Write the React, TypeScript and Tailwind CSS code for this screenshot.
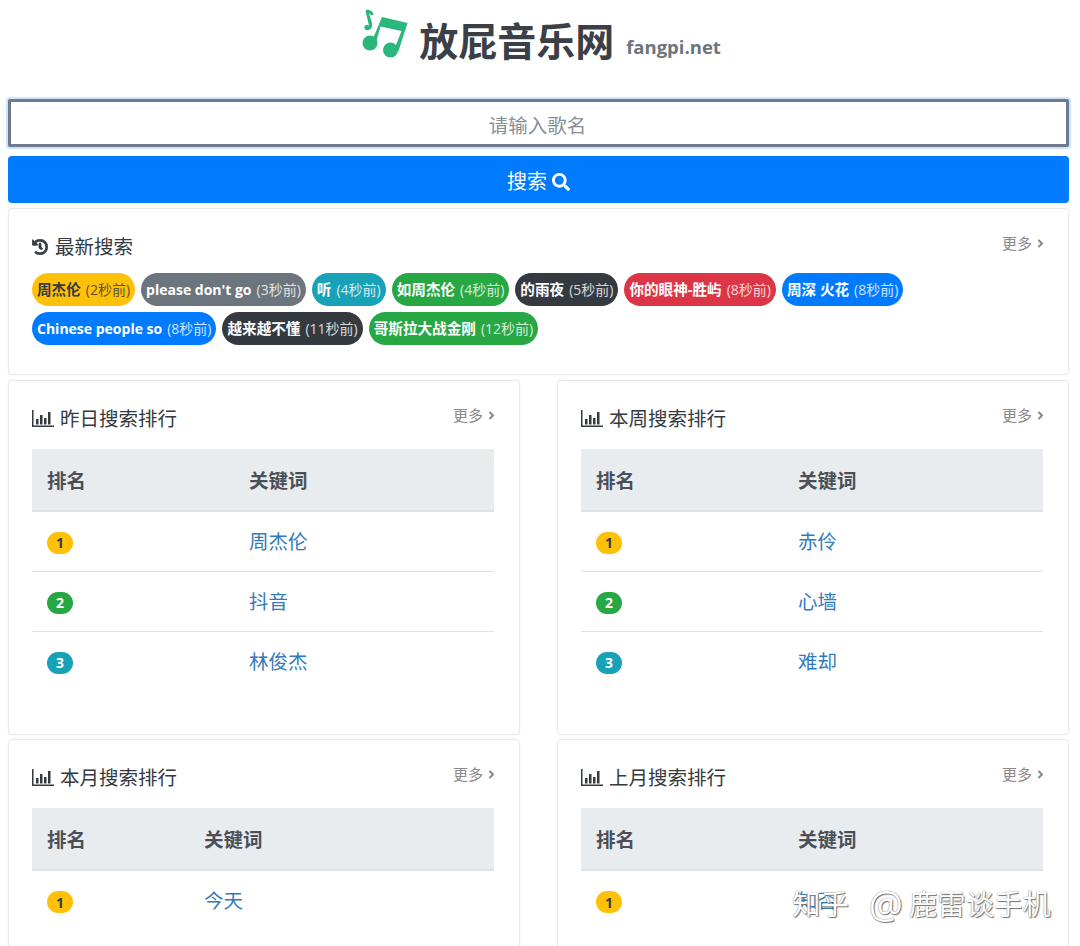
import { FaAngleRight, FaHistory, FaSearch } from "react-icons/fa";

function Logo() {
  return (
    <svg width="50" height="54" viewBox="0 0 50 54" className="mr-[9px]" fill="#2bb67c">
      <circle cx="10" cy="35" r="7.500" />
      <circle cx="30.500" cy="42" r="7.500" />
      <path d="M22 9 L47.500 15 L38.500 43 L34 42 L41.500 23 L20.500 18.500 L15.500 36 L12 33 Z" />
      <path d="M7 1.500 C11 2 13.500 4 13.500 7 L10.500 7 C10.500 6 9.500 5.500 9 5.500 L12 15 C13 19.500 10 23 6 22 C3.500 21 4 17.500 6.500 17 C7.500 16.800 8.500 17 9 17.500 L5.500 3 Z" />
    </svg>
  );
}

function BarIcon() {
  return (
    <svg width="22" height="18" viewBox="0 0 22 18" fill="#343a40" className="mr-[6px] shrink-0">
      <path d="M0 0h1.500v15.500H22V17H0z" />
      <path d="M4 9h2.500v5.500H4zM8 5h2.500v9.500H8zM12 8h2.500v6.500H12zM16 2h2.500v12.500H16z" />
    </svg>
  );
}

const Pill = ({ c, name, time, latin }: { c: string; name: string; time: string; latin?: boolean }) => (
  <span className={`inline-flex h-[33px] items-center rounded-full px-[5px] text-[14px] leading-none whitespace-nowrap ${c}`}>
    <b className={latin ? "font-bold" : "text-[14.6px] font-bold"}>{name}</b>
    <span className="ml-[5px] opacity-80">{time}</span>
  </span>
);

const More = () => (
  <span className="-mr-[4px] flex items-center gap-[2px] text-[15px] leading-none whitespace-nowrap text-[#8a8a8a]">
    更多
    <FaAngleRight className="text-[13px]" />
  </span>
);

const Head = ({ icon, title }: { icon: React.ReactNode; title: string }) => (
  <div className="flex items-center text-[19.5px] leading-[24px] text-[#343a40]">
    {icon}
    <span>{title}</span>
  </div>
);

const ranks = [
  "bg-[#ffc107] text-[#343a40]",
  "bg-[#28a745] text-white",
  "bg-[#17a2b8] text-white",
];

function RankCard({
  title,
  items,
  colClass,
}: {
  title: string;
  items: string[];
  colClass: string;
}) {
  return (
    <section className="h-[355px] rounded-[4px] border border-[#e6e9ec] bg-white pt-[26px] pr-[25px] pl-[23px] shadow-[0_0_3px_rgba(0,0,0,0.05)]">
      <div className="flex items-start justify-between">
        <Head icon={<BarIcon />} title={title} />
        <div className="mt-[1px]">
          <More />
        </div>
      </div>
      <table className="mt-[18px] w-full table-fixed border-collapse text-[19.5px]">
        <thead>
          <tr className="h-[62px] border-b-2 border-[#dee2e6] bg-[#e9ecef] text-left font-bold text-[#495057]">
            <th className={`pt-[2px] pl-[15px] ${colClass}`}>排名</th>
            <th className="pt-[2px]">关键词</th>
          </tr>
        </thead>
        <tbody>
          {items.map((it, i) => (
            <tr key={it} className="h-[60px] border-b border-[#dee2e6] last:border-b-0">
              <td className="pt-[3px] pl-[15px]">
                <span className={`flex h-[22px] w-[26px] items-center justify-center rounded-full text-[14px] font-bold ${ranks[i]}`}>
                  {i + 1}
                </span>
              </td>
              <td className="pt-[1px] text-[#337ab7]">{it}</td>
            </tr>
          ))}
        </tbody>
      </table>
    </section>
  );
}

export default function App() {
  return (
    <div className="relative h-[946px] overflow-hidden bg-white pr-[11px] pl-[8px] font-['Open_Sans','Noto_Sans_CJK_SC',sans-serif]">
      <header className="flex h-[99px] items-start justify-center pt-[8px] pl-[4px]">
        <Logo />
        <span className="mt-[8px] text-[39px] leading-[50px] font-bold text-[#3b4046]">放屁音乐网</span>
        <span className="mt-[26px] ml-[12px] text-[18.5px] leading-[26px] font-bold text-[#6c757d]">fangpi.net</span>
      </header>

      <div className="flex h-[48px] items-center justify-center rounded-[2px] border-[3px] border-[#6f7a8c] bg-white pt-[5px] pr-[2px] text-[19.5px] text-[#868e96] shadow-[0_0_0_2px_rgba(0,123,255,0.2)]">
        请输入歌名
      </div>
      <button className="mt-[9px] flex h-[47px] w-full items-center justify-center gap-[5px] rounded-[4px] bg-[#007bff] pt-[4px] text-[20px] text-white">
        搜索 <FaSearch className="text-[18px]" />
      </button>

      <section className="mt-[5px] h-[167px] rounded-[4px] border border-[#e6e9ec] bg-white pt-[26px] pr-[25px] pl-[23px] shadow-[0_0_3px_rgba(0,0,0,0.05)]">
        <div className="flex items-start justify-between">
          <Head icon={<FaHistory className="mr-[7px] stroke-current stroke-[24] text-[16px]" />} title="最新搜索" />
          <div className="mt-[1px]">
            <More />
          </div>
        </div>
        <div className="mt-[14px] flex flex-wrap gap-x-[6px] gap-y-[6px]">
          <Pill c="bg-[#ffc107] text-[#343a40]" name="周杰伦" time="(2秒前)" />
          <Pill latin c="bg-[#6c757d] text-white" name="please don't go" time="(3秒前)" />
          <Pill c="bg-[#17a2b8] text-white" name="听" time="(4秒前)" />
          <Pill c="bg-[#28a745] text-white" name="如周杰伦" time="(4秒前)" />
          <Pill c="bg-[#343a40] text-white" name="的雨夜" time="(5秒前)" />
          <Pill c="bg-[#dc3545] text-white" name="你的眼神-胜屿" time="(8秒前)" />
          <Pill c="bg-[#007bff] text-white" name="周深 火花" time="(8秒前)" />
          <Pill latin c="bg-[#007bff] text-white" name="Chinese people so" time="(8秒前)" />
          <Pill c="bg-[#343a40] text-white" name="越来越不懂" time="(11秒前)" />
          <Pill c="bg-[#28a745] text-white" name="哥斯拉大战金刚" time="(12秒前)" />
        </div>
      </section>

      <div className="mt-[5px] grid grid-cols-[512px_512px] justify-between gap-y-[4px]">
        <RankCard title="昨日搜索排行" colClass="w-[217px]" items={["周杰伦", "抖音", "林俊杰"]} />
        <RankCard title="本周搜索排行" colClass="w-[217px]" items={["赤伶", "心墙", "难却"]} />
        <RankCard title="本月搜索排行" colClass="w-[172px]" items={["今天"]} />
        <RankCard title="上月搜索排行" colClass="w-[217px]" items={["知否"]} />
      </div>

      <div className="absolute top-[885px] left-[792px] flex items-center text-[28.4px] leading-[34px] whitespace-nowrap text-white [text-shadow:0_0_1px_#555,1px_1px_1px_#777]">
        <span>知乎</span>
        <span className="ml-[20px] text-[38px] leading-none">@</span>
        <span className="ml-[6px]">鹿雷谈手机</span>
      </div>
    </div>
  );
}
